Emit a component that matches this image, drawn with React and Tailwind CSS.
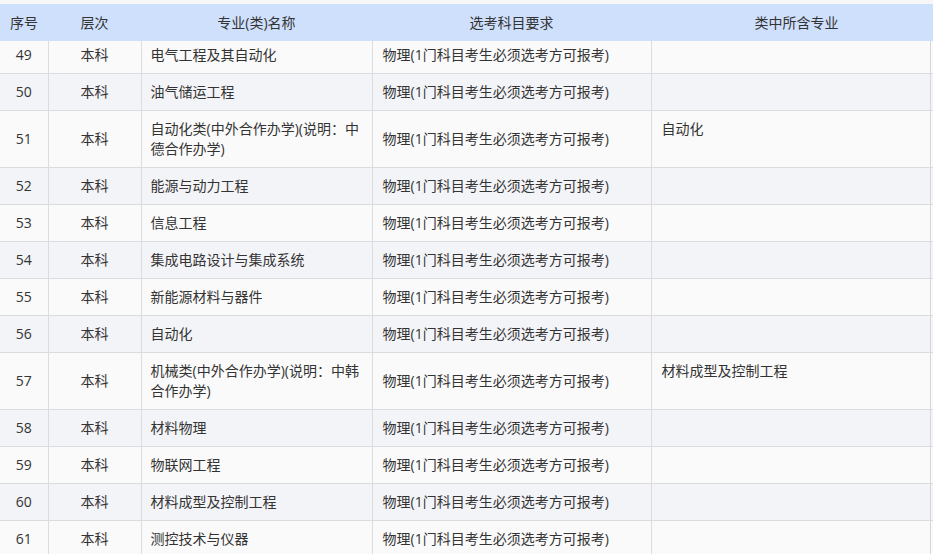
import React from 'react';

const REQ = '物理(1门科目考生必须选考方可报考)';

const rows = [
  { no: 49, name: '电气工程及其自动化', sub: '' },
  { no: 50, name: '油气储运工程', sub: '' },
  { no: 51, name: '自动化类(中外合作办学)(说明：中德合作办学)', sub: '自动化' },
  { no: 52, name: '能源与动力工程', sub: '' },
  { no: 53, name: '信息工程', sub: '' },
  { no: 54, name: '集成电路设计与集成系统', sub: '' },
  { no: 55, name: '新能源材料与器件', sub: '' },
  { no: 56, name: '自动化', sub: '' },
  { no: 57, name: '机械类(中外合作办学)(说明：中韩合作办学)', sub: '材料成型及控制工程' },
  { no: 58, name: '材料物理', sub: '' },
  { no: 59, name: '物联网工程', sub: '' },
  { no: 60, name: '材料成型及控制工程', sub: '' },
  { no: 61, name: '测控技术与仪器', sub: '' },
];

export default function App() {
  return (
    <div
      className="w-[933px] h-[554px] overflow-hidden bg-[#f7f7f7] text-[14px] leading-5 text-[#333]"
      style={{ fontFamily: '"Open Sans", "Noto Sans CJK SC", sans-serif' }}
    >
      <div className="h-1" />
      <table className="table-fixed border-collapse w-[933px]">
        <colgroup>
          <col className="w-[48px]" />
          <col className="w-[93px]" />
          <col className="w-[231px]" />
          <col className="w-[279px]" />
          <col className="w-[279px]" />
          <col className="w-[3px]" />
        </colgroup>
        <thead>
          <tr className="bg-[#cfe0fc] h-[37px]">
            <th className="font-normal text-center px-1">序号</th>
            <th className="font-normal text-center">层次</th>
            <th className="font-normal text-center">专业(类)名称</th>
            <th className="font-normal text-center">选考科目要求</th>
            <th className="font-normal text-center pl-3">类中所含专业</th>
            <th />
          </tr>
        </thead>
        <tbody>
          {rows.map((r, i) => {
            const first = i === 0;
            const pad = first ? 'pt-1 pb-2' : 'py-2';
            const bg = i % 2 === 0 ? 'bg-[#fafafa]' : 'bg-[#f3f4f8]';
            return (
              <tr key={r.no} className={`${bg} border-b border-[#dcdcdf]`}>
                <td className={`${pad} text-center border-r border-[#dcdcdf] align-middle`}>{r.no}</td>
                <td className={`${pad} text-center border-r border-[#dcdcdf] align-middle`}>本科</td>
                <td className={`${pad} pl-[9px] pr-[8px] border-r border-[#dcdcdf] align-middle`}>{r.name}</td>
                <td className={`${pad} pl-[10px] pr-2 border-r border-[#dcdcdf] align-middle`}>{REQ}</td>
                <td className={`${pad} pl-[10px] pr-2 border-r border-[#d6d6d9] align-top`}>{r.sub}</td>
                <td />
              </tr>
            );
          })}
        </tbody>
      </table>
    </div>
  );
}
